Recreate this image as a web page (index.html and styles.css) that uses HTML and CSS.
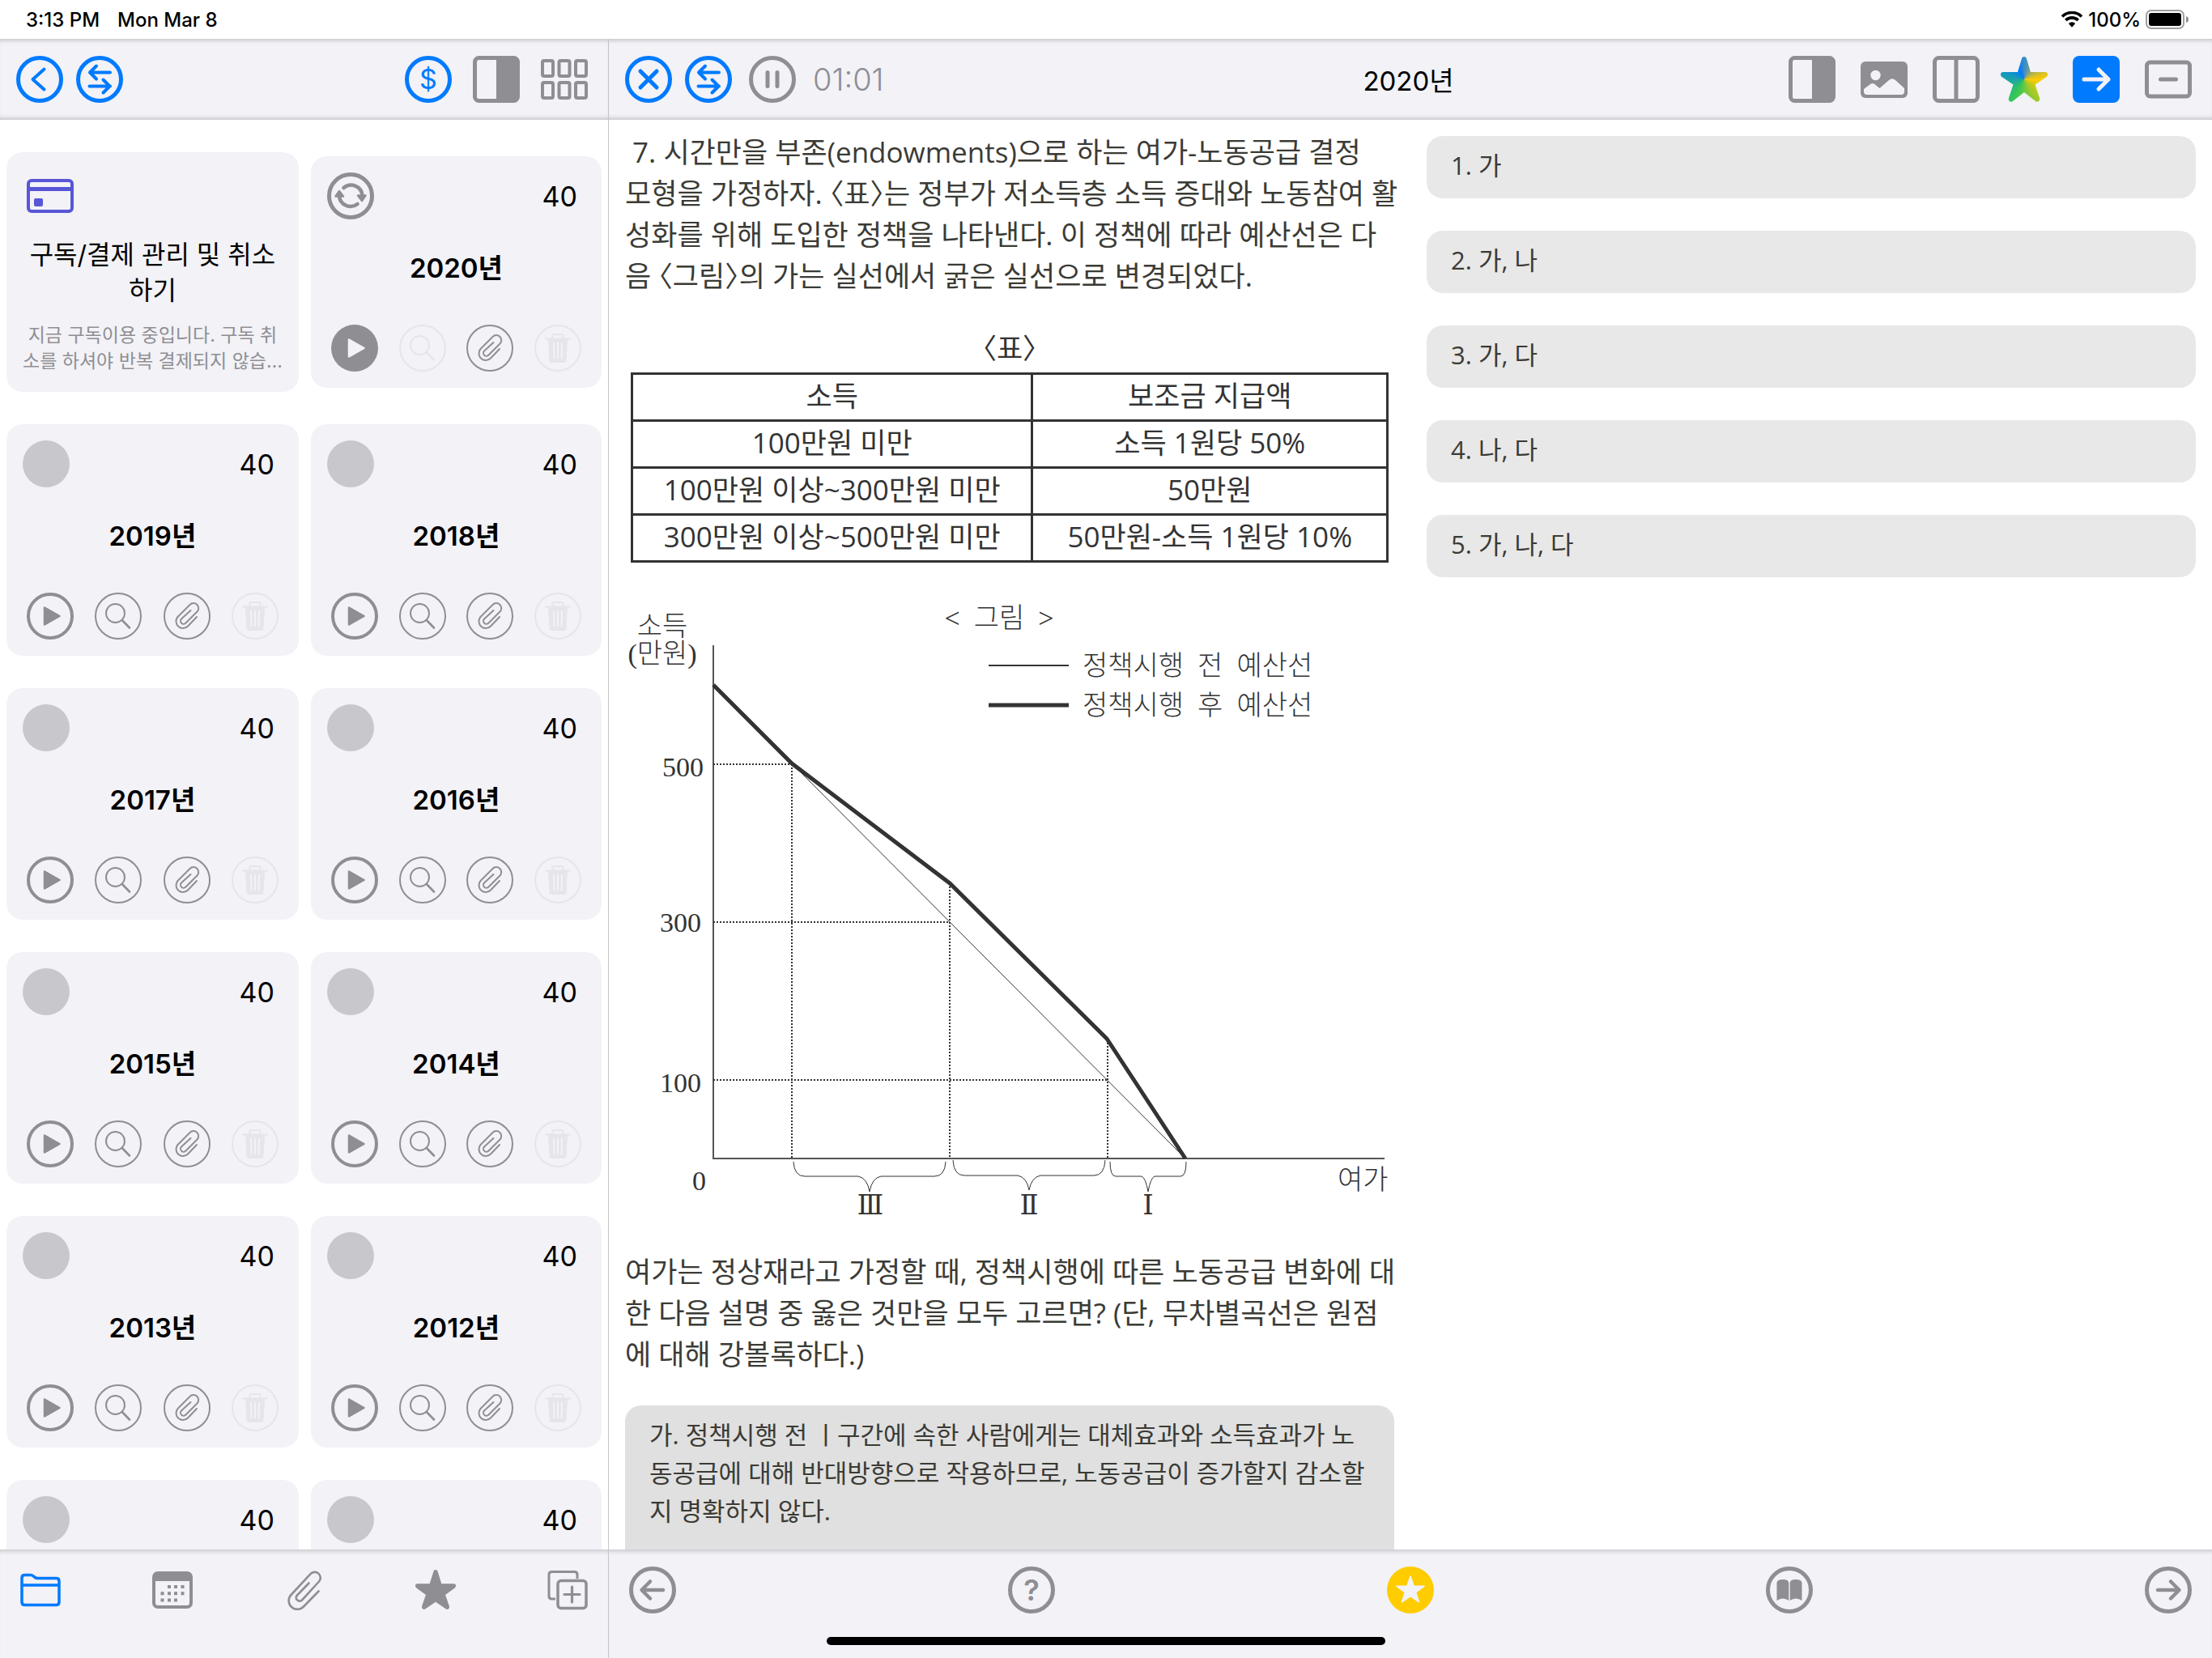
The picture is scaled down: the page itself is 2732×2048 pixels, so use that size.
FILE: index.html
```
<!DOCTYPE html>
<html lang="ko">
<head>
    <meta charset="UTF-8">
    <meta name="viewport" content="width=device-width, initial-scale=1.0">
    <title>2020년</title>
    <link rel="stylesheet" href="styles.css">
</head>
<body>
    <!-- shared icons -->
    <svg class="sprite" aria-hidden="true">
        <symbol id="swap" viewBox="0 0 58 58">
            <circle cx="29" cy="29" r="26.5" />
            <path d="M42 20.500H17M25 12.500L17 20.500L25 28.500M16.500 37.500H42M33.500 29.500L41.500 37.500L33.500 45.500" stroke-width="4" />
        </symbol>
        <symbol id="play" viewBox="0 0 58 58">
            <circle cx="29" cy="29" r="27" stroke-width="4" />
            <path d="M22 18.500L40.500 29L22 39.500z" fill="currentColor" stroke-width="2.500" />
        </symbol>
        <symbol id="search" viewBox="0 0 58 58">
            <circle cx="29" cy="29" r="28" stroke-width="2" />
            <circle cx="25.500" cy="25.500" r="11.500" stroke-width="2" />
            <path d="M33.800 34L43 43.500" stroke-width="2.600" />
        </symbol>
        <symbol id="clip" viewBox="0 0 58 58">
            <circle cx="29" cy="29" r="28" stroke-width="2" />
            <path d="M41 30L30 41.500A8.500 8.500 0 0 1 17.500 30L32.500 15A6 6 0 0 1 41.500 23.500L27.500 37.500A3.500 3.500 0 0 1 22 32.500L33.500 22" stroke-width="2" />
        </symbol>
        <symbol id="trash" viewBox="0 0 58 58">
            <circle cx="29" cy="29" r="28" stroke-width="2" />
            <path d="M14 17.500H44M22.500 17V13.500Q22.500 12 24 12H34Q35.500 12 35.500 13.500V17" stroke-width="2" />
            <path d="M17 18H41L39.500 44Q39.300 47 37 47H21Q18.700 47 18.500 44z" fill="currentColor" stroke="none" />
            <path d="M24 23L24.500 41.500M29 23V41.500M34 23L33.500 41.500" stroke="#f2f2f7" stroke-width="2" />
        </symbol>
        <symbol id="half" viewBox="0 0 58 58">
            <rect x="2.500" y="2.500" width="53" height="53" rx="5" />
            <path d="M29 2H51Q56 2 56 7V51Q56 56 51 56H29z" fill="currentColor" stroke="none" />
        </symbol>
    </svg>

    <header class="status">
        <span>3:13 PM</span>
        <span>Mon Mar 8</span>
        <div class="status-right">
            <svg class="wifi" viewBox="0 0 28 20"><path d="M2 6.500A17 17 0 0 1 26 6.500M6.300 11A11 11 0 0 1 21.700 11" stroke-width="3.600" stroke-linecap="butt" /><path d="M9.800 15A6 6 0 0 1 18.200 15L14 19.800z" fill="currentColor" stroke="none" /></svg>
            <span>100%</span>
            <svg class="battery" viewBox="0 0 54 24"><rect x="1" y="1" width="46" height="22" rx="6" stroke="#a0a0a0" stroke-width="2" /><rect x="4" y="4" width="40" height="16" rx="3" fill="#000" stroke="none" /><path d="M50 8Q53 9 53 12T50 16z" fill="#8e8e93" stroke="none" /></svg>
        </div>
    </header>

    <div class="app">
        <aside class="sidebar">
            <nav class="bar top-bar">
                <div class="group tight blue">
                    <button aria-label="Back"><svg class="icon" viewBox="0 0 58 58"><circle cx="29" cy="29" r="26.5" /><path d="M34.500 16.500L20.500 29L34.500 41.500" stroke-width="4" /></svg></button>
                    <button aria-label="Sync"><svg class="icon"><use href="#swap" /></svg></button>
                </div>
                <div class="group">
                    <button class="blue" aria-label="Payment"><svg class="icon" viewBox="0 0 58 58"><circle cx="29" cy="29" r="26.5" /><text x="29" y="40.500" class="glyph">$</text></svg></button>
                    <button aria-label="Split"><svg class="icon"><use href="#half" /></svg></button>
                    <button aria-label="Grid"><svg class="icon" viewBox="0 0 58 58"><g stroke-width="4"><rect x="2" y="6" width="13" height="19" rx="2" /><rect x="22.500" y="6" width="13" height="19" rx="2" /><rect x="43" y="6" width="13" height="19" rx="2" /><rect x="2" y="33" width="13" height="19" rx="2" /><rect x="22.500" y="33" width="13" height="19" rx="2" /><rect x="43" y="33" width="13" height="19" rx="2" /></g></svg></button>
                </div>
            </nav>

            <div class="cards">
                <section class="card pay">
                    <svg class="card-icon" viewBox="0 0 58 42"><rect x="2" y="2" width="54" height="38" rx="4" stroke-width="4" /><path d="M2 12.500H56" stroke-width="5" /><rect x="9" y="24" width="11" height="10" rx="2" fill="currentColor" stroke="none" /></svg>
                    <h2>구독/결제 관리 및 취소<br>하기</h2>
                    <p>지금 구독이용 중입니다. 구독 취<br>소를 하셔야 반복 결제되지 않습…</p>
                </section>
                <section class="card">
                    <div class="card-top">
                        <svg class="icon" viewBox="0 0 58 58"><circle cx="29" cy="29" r="26.5" /><path d="M20.500 19A14 14 0 0 1 43.500 28M37.500 39A14 14 0 0 1 15 29" stroke-width="4.500" /><path d="M38 28.500H47.500L43 35zM10.500 29.500H20L15 23z" fill="currentColor" stroke-width="2.500" /></svg>
                        <span>40</span>
                    </div>
                    <h2>2020년</h2>
                    <div class="actions">
                        <button aria-label="Play"><svg class="icon" viewBox="0 0 58 58"><circle cx="29" cy="29" r="29" fill="currentColor" stroke="none" /><path d="M22 18.500L40.500 29L22 39.500z" fill="#f2f2f7" stroke="#f2f2f7" stroke-width="2.500" /></svg></button>
                        <button disabled aria-label="Search"><svg class="icon"><use href="#search" /></svg></button>
                        <button aria-label="Clip"><svg class="icon"><use href="#clip" /></svg></button>
                        <button disabled aria-label="Delete"><svg class="icon"><use href="#trash" /></svg></button>
                    </div>
                </section>
                <section class="card">
                    <div class="card-top"><i class="dot"></i><span>40</span></div>
                    <h2>2019년</h2>
                    <div class="actions">
                        <button aria-label="Play"><svg class="icon"><use href="#play" /></svg></button>
                        <button aria-label="Search"><svg class="icon"><use href="#search" /></svg></button>
                        <button aria-label="Clip"><svg class="icon"><use href="#clip" /></svg></button>
                        <button disabled aria-label="Delete"><svg class="icon"><use href="#trash" /></svg></button>
                    </div>
                </section>
                <section class="card">
                    <div class="card-top"><i class="dot"></i><span>40</span></div>
                    <h2>2018년</h2>
                    <div class="actions">
                        <button aria-label="Play"><svg class="icon"><use href="#play" /></svg></button>
                        <button aria-label="Search"><svg class="icon"><use href="#search" /></svg></button>
                        <button aria-label="Clip"><svg class="icon"><use href="#clip" /></svg></button>
                        <button disabled aria-label="Delete"><svg class="icon"><use href="#trash" /></svg></button>
                    </div>
                </section>
                <section class="card">
                    <div class="card-top"><i class="dot"></i><span>40</span></div>
                    <h2>2017년</h2>
                    <div class="actions">
                        <button aria-label="Play"><svg class="icon"><use href="#play" /></svg></button>
                        <button aria-label="Search"><svg class="icon"><use href="#search" /></svg></button>
                        <button aria-label="Clip"><svg class="icon"><use href="#clip" /></svg></button>
                        <button disabled aria-label="Delete"><svg class="icon"><use href="#trash" /></svg></button>
                    </div>
                </section>
                <section class="card">
                    <div class="card-top"><i class="dot"></i><span>40</span></div>
                    <h2>2016년</h2>
                    <div class="actions">
                        <button aria-label="Play"><svg class="icon"><use href="#play" /></svg></button>
                        <button aria-label="Search"><svg class="icon"><use href="#search" /></svg></button>
                        <button aria-label="Clip"><svg class="icon"><use href="#clip" /></svg></button>
                        <button disabled aria-label="Delete"><svg class="icon"><use href="#trash" /></svg></button>
                    </div>
                </section>
                <section class="card">
                    <div class="card-top"><i class="dot"></i><span>40</span></div>
                    <h2>2015년</h2>
                    <div class="actions">
                        <button aria-label="Play"><svg class="icon"><use href="#play" /></svg></button>
                        <button aria-label="Search"><svg class="icon"><use href="#search" /></svg></button>
                        <button aria-label="Clip"><svg class="icon"><use href="#clip" /></svg></button>
                        <button disabled aria-label="Delete"><svg class="icon"><use href="#trash" /></svg></button>
                    </div>
                </section>
                <section class="card">
                    <div class="card-top"><i class="dot"></i><span>40</span></div>
                    <h2>2014년</h2>
                    <div class="actions">
                        <button aria-label="Play"><svg class="icon"><use href="#play" /></svg></button>
                        <button aria-label="Search"><svg class="icon"><use href="#search" /></svg></button>
                        <button aria-label="Clip"><svg class="icon"><use href="#clip" /></svg></button>
                        <button disabled aria-label="Delete"><svg class="icon"><use href="#trash" /></svg></button>
                    </div>
                </section>
                <section class="card">
                    <div class="card-top"><i class="dot"></i><span>40</span></div>
                    <h2>2013년</h2>
                    <div class="actions">
                        <button aria-label="Play"><svg class="icon"><use href="#play" /></svg></button>
                        <button aria-label="Search"><svg class="icon"><use href="#search" /></svg></button>
                        <button aria-label="Clip"><svg class="icon"><use href="#clip" /></svg></button>
                        <button disabled aria-label="Delete"><svg class="icon"><use href="#trash" /></svg></button>
                    </div>
                </section>
                <section class="card">
                    <div class="card-top"><i class="dot"></i><span>40</span></div>
                    <h2>2012년</h2>
                    <div class="actions">
                        <button aria-label="Play"><svg class="icon"><use href="#play" /></svg></button>
                        <button aria-label="Search"><svg class="icon"><use href="#search" /></svg></button>
                        <button aria-label="Clip"><svg class="icon"><use href="#clip" /></svg></button>
                        <button disabled aria-label="Delete"><svg class="icon"><use href="#trash" /></svg></button>
                    </div>
                </section>
                <section class="card">
                    <div class="card-top"><i class="dot"></i><span>40</span></div>
                </section>
                <section class="card">
                    <div class="card-top"><i class="dot"></i><span>40</span></div>
                </section>
            </div>

            <nav class="bar bottom-bar">
                <button class="blue" aria-label="Folder"><svg class="tab" viewBox="0 0 50 50"><path d="M2 40V10Q2 6.500 5.500 6.500H13Q15 6.500 17 8.500T21 10.500H44.500Q48 10.500 48 14V40Q48 43.500 44.500 43.500H5.500Q2 43.500 2 40zM2 19H48" stroke-width="3.500" /></svg></button>
                <button aria-label="Calendar"><svg class="tab" viewBox="0 0 50 50"><rect x="2" y="4" width="46" height="42" rx="5" stroke-width="4" /><path d="M1 14V8Q1 3 6 3H44Q49 3 49 8V14z" fill="currentColor" stroke="none" /><path d="M19 21h4M27 21h4M35.500 21h4M10.500 29.200h4M19 29.200h4M27 29.200h4M35.500 29.200h4M10.500 37.500h4M19 37.500h4M27 37.500h4" stroke-width="4" stroke-linecap="butt" /></svg></button>
                <button aria-label="Clips"><svg class="tab" viewBox="-4 -1 50 50"><path d="M38.500 25.500L20 44.500A10.500 10.500 0 0 1 4.500 30L28.500 4.200A6.800 6.800 0 0 1 39 13.500L18 36.500A4.300 4.300 0 0 1 11.500 31L26.500 15.500" stroke-width="2.600" /></svg></button>
                <button aria-label="Favorites"><svg class="tab" viewBox="0 0 58 58"><path d="M29 0c1.600 0 2.600 1 3 2.500L37.500 20H55c3.500 0 4 4 1.500 6L43 36 48.500 52c1 3.500-2 6-5 4L29 46 14.500 56c-3 2-6-.5-5-4L15 36 1.500 26C-1 24-.5 20 3 20H20.500L26 2.500C26.400 1 27.400 0 29 0z" fill="currentColor" stroke="none" /></svg></button>
                <button aria-label="Add"><svg class="tab" viewBox="0 0 50 50"><path d="M10 36H5.500Q2 36 2 32.500V6Q2 2.500 5.500 2.500H33.500Q37 2.500 37 6V11" stroke-width="3" stroke-linecap="butt" /><rect x="13" y="13.500" width="35" height="34" rx="4" stroke-width="3.500" /><path d="M30.500 21V40M21 30.500H40" stroke-width="3.200" /></svg></button>
            </nav>
        </aside>

        <main class="main">
            <nav class="bar top-bar main-top">
                <div class="group tight">
                    <button class="blue" aria-label="Close"><svg class="icon" viewBox="0 0 58 58"><circle cx="29" cy="29" r="26.5" /><path d="M19 19L39 39M39 19L19 39" /></svg></button>
                    <button class="blue" aria-label="Sync"><svg class="icon"><use href="#swap" /></svg></button>
                    <button class="pause" aria-label="Pause"><svg class="icon" viewBox="0 0 58 58"><circle cx="29" cy="29" r="26.5" /><path d="M23 20.500V37.500M35 20.500V37.500" /></svg></button>
                    <time class="timer">01:01</time>
                </div>
                <h1>2020년</h1>
                <div class="group tools">
                    <button aria-label="Split"><svg class="icon"><use href="#half" /></svg></button>
                    <button aria-label="Image"><svg class="icon" viewBox="0 0 58 58"><rect x="0" y="7" width="58" height="45" rx="6" fill="currentColor" stroke="none" /><circle cx="18.500" cy="24" r="6.200" fill="#f2f2f7" stroke="none" /><path d="M4 44V41L12 35Q15 33 18 35.500L23.500 40L35 30Q39 26.500 43 30L54 40V44Q54 48 50 48H8Q4 48 4 44z" fill="#f2f2f7" stroke="none" /></svg></button>
                    <button aria-label="Columns"><svg class="icon" viewBox="0 0 58 58"><rect x="2.500" y="2.500" width="53" height="53" rx="5" /><path d="M29 3V55" /></svg></button>
                    <button class="star-button" aria-label="Favorite"><i class="color-star"></i></button>
                    <button class="blue" aria-label="Next"><svg class="icon" viewBox="0 0 58 58"><rect width="58" height="58" rx="8" fill="currentColor" stroke="none" /><path d="M14 29H44M32 17L44 29L32 41" stroke="#f2f2f7" /></svg></button>
                    <button aria-label="Collapse"><svg class="icon" viewBox="0 0 58 58"><rect x="2.500" y="8" width="53" height="42" rx="4" /><path d="M19.500 29H38.500" /></svg></button>
                </div>
            </nav>

            <div class="content">
                <article class="question">
                    <p>&nbsp;7. 시간만을 부존(endowments)으로 하는 여가-노동공급 결정<br>모형을 가정하자. 〈표〉는 정부가 저소득층 소득 증대와 노동참여 활<br>성화를 위해 도입한 정책을 나타낸다. 이 정책에 따라 예산선은 다<br>음 〈그림〉의 가는 실선에서 굵은 실선으로 변경되었다.</p>
                    <table>
                        <caption>〈표〉</caption>
                        <tr><th>소득</th><th>보조금 지급액</th></tr>
                        <tr><td>100만원 미만</td><td>소득 1원당 50%</td></tr>
                        <tr><td>100만원 이상~300만원 미만</td><td>50만원</td></tr>
                        <tr><td>300만원 이상~500만원 미만</td><td>50만원-소득 1원당 10%</td></tr>
                    </table>

                    <svg class="chart" viewBox="0 0 950 780">
                        <text x="46" y="46" class="mid">소득</text>
                        <text x="46" y="80" class="mid">(만원)</text>
                        <text x="462" y="36" class="mid">&lt;&#160; 그림 &#160;&gt;</text>
                        <path d="M449 83H548" stroke-width="2" />
                        <path d="M449 132H548" stroke-width="5" />
                        <text x="565" y="95">정책시행&#160; 전&#160; 예산선</text>
                        <text x="565" y="144">정책시행&#160; 후&#160; 예산선</text>
                        <path d="M109 58V692H938" stroke="#555" stroke-width="2" />
                        <path d="M206 204L692 692" stroke-width="1" />
                        <g stroke-width="2" stroke-dasharray="2 2">
                            <path d="M109 205H206M109 400H401M109 595H596" />
                            <path d="M206 205V692M401 352V692M596 545V692" />
                        </g>
                        <path d="M109 107L206 204L401 352L595 544L692 692" stroke-width="5" />
                        <g stroke-width="1">
                            <path d="M208 696Q209 714 222 714H288Q299 716 302 733Q305 716 316 714H382Q395 714 396 696" />
                            <path d="M405 694Q406 713 419 713H485Q496 715 499 731Q502 715 513 713H579Q592 713 593 694" />
                            <path d="M599 696Q599 714 606 714H638Q643 716 646 733Q649 716 654 714H686Q693 714 693 696" />
                        </g>
                        <g class="numbers">
                            <text x="97" y="220">500</text>
                            <text x="94" y="412">300</text>
                            <text x="94" y="610">100</text>
                            <text x="100" y="731">0</text>
                        </g>
                        <g class="roman">
                            <text x="303" y="761">Ⅲ</text>
                            <text x="499" y="761">Ⅱ</text>
                            <text x="646" y="761">Ⅰ</text>
                        </g>
                        <text x="880" y="730">여가</text>
                    </svg>

                    <p>여가는 정상재라고 가정할 때, 정책시행에 따른 노동공급 변화에 대<br>한 다음 설명 중 옳은 것만을 모두 고르면? (단, 무차별곡선은 원점<br>에 대해 강볼록하다.)</p>
                    <div class="statement">가. 정책시행 전 ㅣ구간에 속한 사람에게는 대체효과와 소득효과가 노<br>동공급에 대해 반대방향으로 작용하므로, 노동공급이 증가할지 감소할<br>지 명확하지 않다.</div>
                </article>

                <div class="choices">
                    <button>1. 가</button>
                    <button>2. 가, 나</button>
                    <button>3. 가, 다</button>
                    <button>4. 나, 다</button>
                    <button>5. 가, 나, 다</button>
                </div>
            </div>

            <nav class="bar bottom-bar">
                <button aria-label="Previous"><svg class="icon" viewBox="0 0 58 58"><circle cx="29" cy="29" r="26.500" stroke-width="5" /><path d="M42 29H16M26 18.500L15.500 29L26 39.500" stroke-width="4.500" /></svg></button>
                <button aria-label="Help"><svg class="icon" viewBox="0 0 58 58"><circle cx="29" cy="29" r="26.500" /><text x="29" y="42" class="glyph help">?</text></svg></button>
                <button class="yellow" aria-label="Star"><svg class="icon" viewBox="0 0 58 58"><circle cx="29" cy="29" r="29" fill="currentColor" stroke="none" /><path d="M29 12L33.200 24.300H46L35.700 32L39.500 44L29 36.700L18.500 44L22.300 32L12 24.300H24.800z" fill="#f2f2f7" stroke="#f2f2f7" stroke-width="1.500" /></svg></button>
                <button aria-label="Book"><svg class="icon" viewBox="0 0 58 58"><circle cx="29" cy="29" r="26.500" /><path d="M13.500 42V20Q14 16 21 16T28.300 20V42Q21 37 13.500 42zM29.700 42V20Q30 16 37 16T44.500 20V42Q37 37 29.700 42z" fill="currentColor" stroke="none" /></svg></button>
                <button aria-label="Next"><svg class="icon" viewBox="0 0 58 58"><circle cx="29" cy="29" r="26.500" /><path d="M16 29H42M32 18.500L42.500 29L32 39.500" stroke-width="4.500" /></svg></button>
            </nav>
        </main>
    </div>
    <div class="home"></div>
</body>
</html>
```
FILE: styles.css
```
* {
    box-sizing: border-box;
}

body {
    margin: 0;
    height: 100vh;
    display: flex;
    flex-direction: column;
    overflow: hidden;
    background: #fff;
    color: #000;
    font-family: Inter, "Noto Sans CJK KR", sans-serif;
}

h1, h2, p {
    margin: 0;
}

button {
    display: block;
    padding: 0;
    border: none;
    background: none;
    color: #8e8e93;
    font: inherit;
    cursor: pointer;
}

button:disabled {
    color: #e5e5ea;
}

svg {
    display: block;
    fill: none;
    stroke: currentColor;
    stroke-width: 5;
    stroke-linecap: round;
    stroke-linejoin: round;
}

.sprite {
    position: absolute;
    width: 0;
    height: 0;
}

.icon {
    width: 58px;
    height: 58px;
}

.blue,
.blue button {
    color: #007aff;
}

.yellow {
    color: #ffcc00;
}

.glyph {
    font-size: 34px;
    text-anchor: middle;
    fill: currentColor;
    stroke: none;
}

.help {
    font-size: 36px;
    font-weight: 600;
}

/* status bar */
.status {
    flex: none;
    display: flex;
    align-items: center;
    gap: 22px;
    height: 48px;
    padding: 0 28px 0 32px;
    font-size: 24px;
    font-weight: 500;
}

.status-right {
    display: flex;
    align-items: center;
    gap: 6px;
    margin-left: auto;
}

.wifi {
    width: 28px;
    height: 20px;
}

.battery {
    width: 54px;
    height: 24px;
}

.app {
    flex: 1;
    min-height: 0;
    display: grid;
    grid-template-columns: 188fr 495fr;
    grid-template-rows: minmax(0, 1fr);
}

.bar {
    flex: none;
    display: flex;
    justify-content: space-between;
    background: #f2f2f7;
    color: #8e8e93;
}

.top-bar {
    align-items: center;
    height: 100px;
    padding: 0 25px 0 20px;
    box-shadow: inset 0 6px 5px -4px #c2c2c8, inset 0 -6px 5px -4px #c2c2c8;
}

.bottom-bar {
    align-items: flex-start;
    height: 134px;
    padding: 21px 25px 0;
    box-shadow: inset 0 6px 5px -4px #c2c2c8;
}

.group {
    display: flex;
    align-items: center;
    gap: 26px;
}

.tight {
    gap: 16px;
}

/* sidebar */
.sidebar {
    min-width: 0;
    display: flex;
    flex-direction: column;
    border-right: 1px solid #c6c6c8;
}

.cards {
    flex: 1;
    min-height: 0;
    overflow: hidden;
    display: grid;
    grid-template-columns: 1fr 1fr;
    grid-auto-rows: max-content;
    align-items: center;
    gap: 40px 15px;
    padding: 40px 8px 0;
}

.card {
    min-height: 286px;
    padding: 20px 25px;
    border-radius: 20px;
    background: #f2f2f7;
}

.card-top {
    display: flex;
    align-items: center;
    justify-content: space-between;
    padding: 0 5px 0 0;
    margin-left: -5px;
    font-size: 34px;
}

.card-top .icon {
    color: #8e8e93;
}

.dot {
    width: 58px;
    height: 58px;
    border-radius: 50%;
    background: #c7c7cc;
}

.card h2 {
    margin: 38px 0 48px;
    font-size: 33px;
    line-height: 44px;
    font-weight: 600;
    text-align: center;
}

.actions {
    display: flex;
    justify-content: space-between;
}

.pay {
    padding: 33px 20px 22px;
    text-align: center;
}

.card-icon {
    width: 58px;
    height: 42px;
    margin-left: 5px;
    color: #5856d6;
}

.pay h2 {
    margin: 30px 0 17px;
    font-size: 32px;
    font-weight: 400;
}

.pay p {
    font-size: 23px;
    line-height: 32px;
    color: #8e8e93;
    white-space: nowrap;
}

.tab {
    width: 50px;
    height: 50px;
}

.sidebar .bottom-bar {
    padding-top: 25px;
}

/* main */
.main {
    min-width: 0;
    display: flex;
    flex-direction: column;
}

.main-top {
    display: grid;
    grid-template-columns: 1fr auto 1fr;
}

.main-top h1 {
    font-size: 33px;
    font-weight: 400;
    color: #000;
}

.pause {
    margin-left: 5px;
}

.timer {
    margin-left: 5px;
    font-size: 38px;
    font-weight: 300;
    color: #8e8e93;
}

.tools {
    justify-self: end;
    gap: 31px;
}

.star-button {
    margin-left: -5px;
}

.color-star {
    display: block;
    width: 58px;
    height: 56px;
    background: conic-gradient(from -25deg, #007aff, #ffcc00 115deg, #34c759 235deg, #007aff);
    clip-path: path("M29 0c1.600 0 2.600 1 3 2.500L37 19H55c3.500 0 4 4 1.500 6L42.500 34.500 48 51c1 3.500-2 6-5 4L29 44 15 55c-3 2-6-.5-5-4L15.500 34.500 1.500 25C-1 23-.5 19 3 19H21L26 2.500C26.400 1 27.400 0 29 0z");
}

.content {
    flex: 1;
    min-height: 0;
    overflow: hidden;
    display: grid;
    grid-template-columns: minmax(0, 1fr) minmax(0, 1fr);
    align-items: start;
    gap: 40px;
    padding: 0 20px;
    font-family: "Open Sans", "Noto Sans CJK KR", sans-serif;
    color: #3b3b36;
}

.question {
    padding-top: 14px;
    font-size: 35px;
    line-height: 51px;
    font-feature-settings: "halt";
    white-space: nowrap;
}

.question table {
    width: calc(100% - 14px);
    margin: 38px 7px 0;
    border-collapse: collapse;
    color: #333;
}

.question caption {
    padding-bottom: 5px;
}

.question th,
.question td {
    width: 47%;
    height: 58px;
    padding: 0 0 4px;
    border: 3px solid #333;
    font-weight: 400;
    line-height: 51px;
    text-align: center;
}

.question th:first-child {
    width: 53%;
}

.chart {
    width: 100%;
    margin: 44px 0 26px;
    stroke: #333;
    stroke-linecap: butt;
    stroke-linejoin: miter;
}

.chart text {
    fill: #333;
    stroke: none;
    font-family: "Liberation Serif", "Noto Sans CJK KR", serif;
    font-size: 34px;
    font-weight: 300;
}

.chart .mid {
    text-anchor: middle;
}

.chart .numbers text {
    text-anchor: end;
}

.chart .roman text {
    font-family: "DejaVu Serif", serif;
    text-anchor: middle;
}

.statement {
    height: 300px;
    margin-top: 38px;
    padding: 13px 30px;
    border-radius: 20px;
    background: #e0e0e0;
    font-size: 31px;
    line-height: 47px;
}

.choices {
    display: flex;
    flex-direction: column;
    gap: 40px;
    padding-top: 20px;
}

.choices button {
    padding: 13px 30px 17px;
    border-radius: 20px;
    background: #e8e8e8;
    color: #3b3b36;
    font-size: 31px;
    line-height: 47px;
    text-align: left;
}

/* home indicator lies over the bottom bars */
.home {
    position: absolute;
    bottom: 16px;
    left: 50%;
    width: 690px;
    height: 10px;
    margin-left: -345px;
    border-radius: 5px;
    background: #000;
}
```
